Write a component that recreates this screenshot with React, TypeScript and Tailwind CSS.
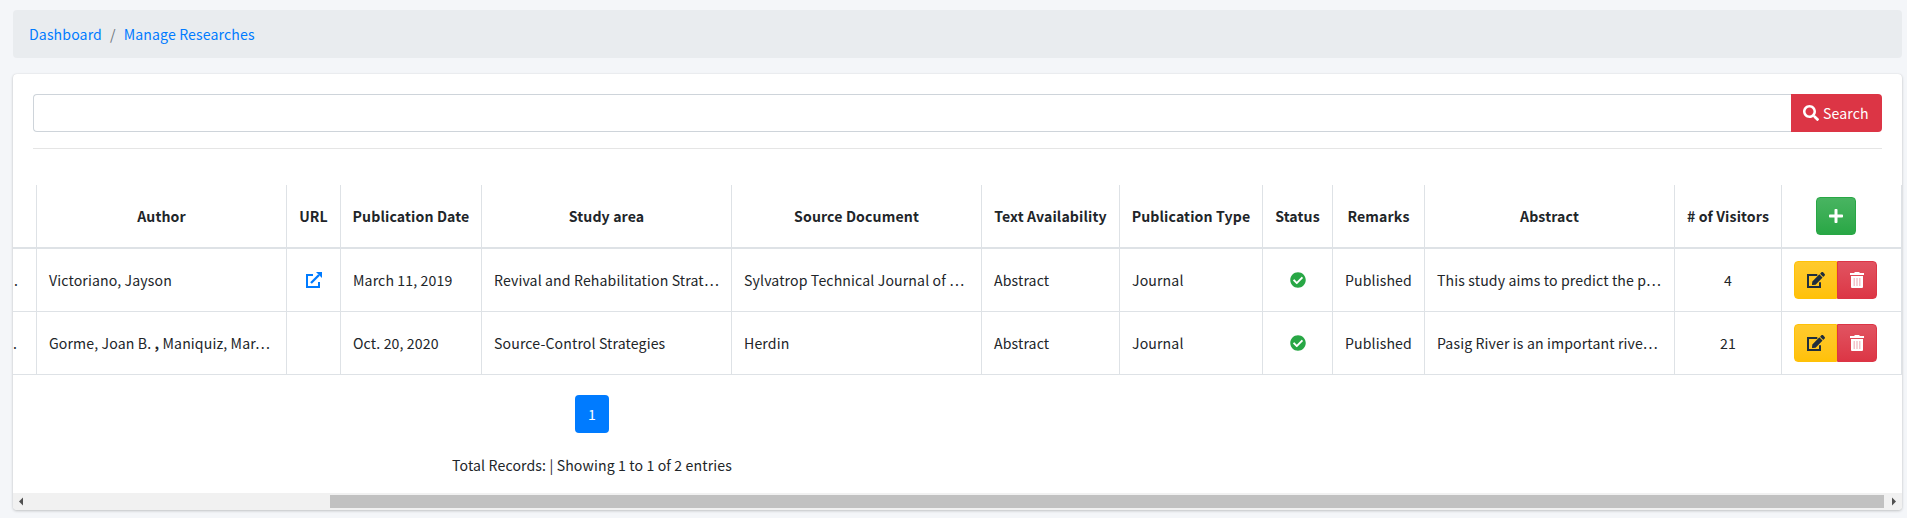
import React from 'react';
import { FaSearch, FaPlus, FaCheckCircle } from 'react-icons/fa';

const cols = [24, 250, 54, 141, 250, 250, 138, 143, 70, 92, 250, 107, 120];
const heads = ['', 'Author', 'URL', 'Publication Date', 'Study area', 'Source Document', 'Text Availability', 'Publication Type', 'Status', 'Remarks', 'Abstract', '# of Visitors'];

type Row = { author: React.ReactNode; url: boolean; date: string; area: string; source: string; abstract: string; visitors: number; dot: string };

const rows: Row[] = [
  { author: 'Victoriano, Jayson', url: true, date: 'March 11, 2019', area: 'Revival and Rehabilitation Strat…', source: 'Sylvatrop Technical Journal of …', abstract: 'This study aims to predict the p…', visitors: 4, dot: 'pl-px' },
  { author: <>Gorme, Joan B. <b>,</b> Maniquiz, Mar…</>, url: false, date: 'Oct. 20, 2020', area: 'Source-Control Strategies', source: 'Herdin', abstract: 'Pasig River is an important rive…', visitors: 21, dot: '' },
];

function OpenIcon() {
  return (
    <svg viewBox="0 0 16 16" className="ml-[7px] size-4" fill="none" stroke="#007bff" strokeWidth="2">
      <path d="M7 3H1v12h12v-5" />
      <path d="M5 11l8-8" strokeWidth="2.3" />
      <path d="M10 0h6v6z" fill="#007bff" stroke="none" />
    </svg>
  );
}

function EditIcon() {
  return (
    <svg viewBox="0 0 576 512" className="h-4 w-[18px]" fill="currentColor">
      <path d="M330 96H32v384h384V325" fill="none" stroke="currentColor" strokeWidth="64" />
      <path d="M402.6 83.2l90.2 90.2c3.8 3.8 3.8 10 0 13.8L274.4 405.6l-92.8 10.3c-12.4 1.4-22.9-9.1-21.5-21.5l10.3-92.8L388.8 83.2c3.8-3.8 10-3.8 13.8 0zm162-22.9l-48.8-48.8c-15.2-15.2-39.9-15.2-55.2 0l-35.4 35.4c-3.8 3.8-3.8 10 0 13.8l90.2 90.2c3.8 3.8 10 3.8 13.8 0l35.4-35.4c15.2-15.3 15.2-40 0-55.2z" />
    </svg>
  );
}

function TrashIcon() {
  return (
    <svg viewBox="0 0 14 16" className="h-4 w-3.5">
      <path d="M4.5 0h5v1H14v2H0V1h4.5zM1 4h12v11a1 1 0 0 1-1 1H2a1 1 0 0 1-1-1z" fill="#fff" />
      <path d="M3.5 6h1.5v8H3.5zM6.25 6h1.5v8h-1.5zM9 6h1.5v8H9z" fill="#f3c3ca" />
    </svg>
  );
}

function Cell({ children, className = '' }: { children?: React.ReactNode; className?: string }) {
  return (
    <td className={`h-[63px] overflow-hidden whitespace-nowrap border-r border-b border-[#dee2e6] p-0 pl-3 align-middle ${className}`}>
      {children}
    </td>
  );
}

export default function App() {
  return (
    <div className="h-[518px] overflow-hidden bg-[#f4f6f9] pt-2.5 pr-[5px] pl-[13px] font-['Noto_Sans_CJK_SC',sans-serif] text-[14.1px] leading-6 tracking-[0.13px] text-[#212529]">
      <nav className="flex h-12 items-center rounded bg-[#e9ecef] px-4 text-[#007bff]">
        <a>Dashboard</a>
        <span className="px-2 text-[#6c757d]">/</span>
        <a>Manage Researches</a>
      </nav>
      <main className="mt-4 flex h-[436px] flex-col overflow-hidden rounded bg-white shadow-[0_0_1px_rgba(0,0,0,0.125),0_1px_3px_rgba(0,0,0,0.2)]">
        <div className="flex px-5 pt-5">
          <input className="h-[38px] min-w-0 flex-1 rounded-l border border-r-0 border-[#ced4da] outline-none" />
          <button className="flex h-[38px] w-[91px] items-center rounded-r bg-[#dc3545] pl-3 text-white">
            <FaSearch className="mr-1 size-4" />
            Search
          </button>
        </div>
        <hr className="mx-5 mt-4 border-[#e5e5e5]" />
        <table className="mt-9 w-[1889px] table-fixed border-separate border-spacing-0">
          <colgroup>
            {cols.map((w, i) => <col key={i} style={{ width: w }} />)}
          </colgroup>
          <thead>
            <tr>
              {heads.map((h) => (
                <th key={h} className="h-16 whitespace-nowrap border-r border-b-2 border-[#dee2e6] p-0 text-center align-middle font-bold">{h}</th>
              ))}
              <th className="h-16 border-r border-b-2 border-[#dee2e6] p-0 pl-[34px] align-middle">
                <button className="flex h-[38px] w-10 items-center justify-center rounded border border-[#28a745] bg-linear-to-b from-[#48b461] to-[#28a745] text-white">
                  <FaPlus className="size-4" />
                </button>
              </th>
            </tr>
          </thead>
          <tbody>
            {rows.map((r) => (
              <tr key={r.date}>
                <td className={`h-[63px] border-r border-b border-[#dee2e6] p-0 align-middle ${r.dot}`}>.</td>
                <Cell>{r.author}</Cell>
                <Cell>{r.url && <OpenIcon />}</Cell>
                <Cell>{r.date}</Cell>
                <Cell>{r.area}</Cell>
                <Cell>{r.source}</Cell>
                <Cell>Abstract</Cell>
                <Cell>Journal</Cell>
                <Cell className="pr-3 text-center"><FaCheckCircle className="mx-auto size-4 text-[#28a745]" /></Cell>
                <Cell>Published</Cell>
                <Cell>{r.abstract}</Cell>
                <Cell className="pr-3 text-center">{r.visitors}</Cell>
                <Cell>
                  <div className="flex">
                    <button className="flex h-[38px] w-[43px] items-center justify-center rounded-l border border-[#ffc107] bg-linear-to-b from-[#ffca2c] to-[#ffc107] text-[#1f2d3d]">
                      <EditIcon />
                    </button>
                    <button className="flex h-[38px] w-10 items-center justify-center rounded-r border border-[#dc3545] bg-linear-to-b from-[#e15361] to-[#dc3545]">
                      <TrashIcon />
                    </button>
                  </div>
                </Cell>
              </tr>
            ))}
          </tbody>
        </table>
        <div className="flex w-[1158px] flex-col items-center pt-5">
          <a className="flex h-[38px] w-[34px] items-center justify-center rounded bg-[#007bff] text-white">1</a>
          <p className="mt-5">Total Records: | Showing 1 to 1 of 2 entries</p>
        </div>
        <div className="mt-auto flex h-[17px] items-center bg-[#f1f1f1]">
          <svg viewBox="0 0 17 17" className="size-[17px]"><path d="M10 4.5v8l-4-4z" fill="#505050" /></svg>
          <div className="ml-[300px] h-[13px] w-[1554px] bg-[#c1c1c1]" />
          <svg viewBox="0 0 17 17" className="ml-px size-[17px]"><path d="M7 4.5v8l4-4z" fill="#505050" /></svg>
        </div>
      </main>
    </div>
  );
}
